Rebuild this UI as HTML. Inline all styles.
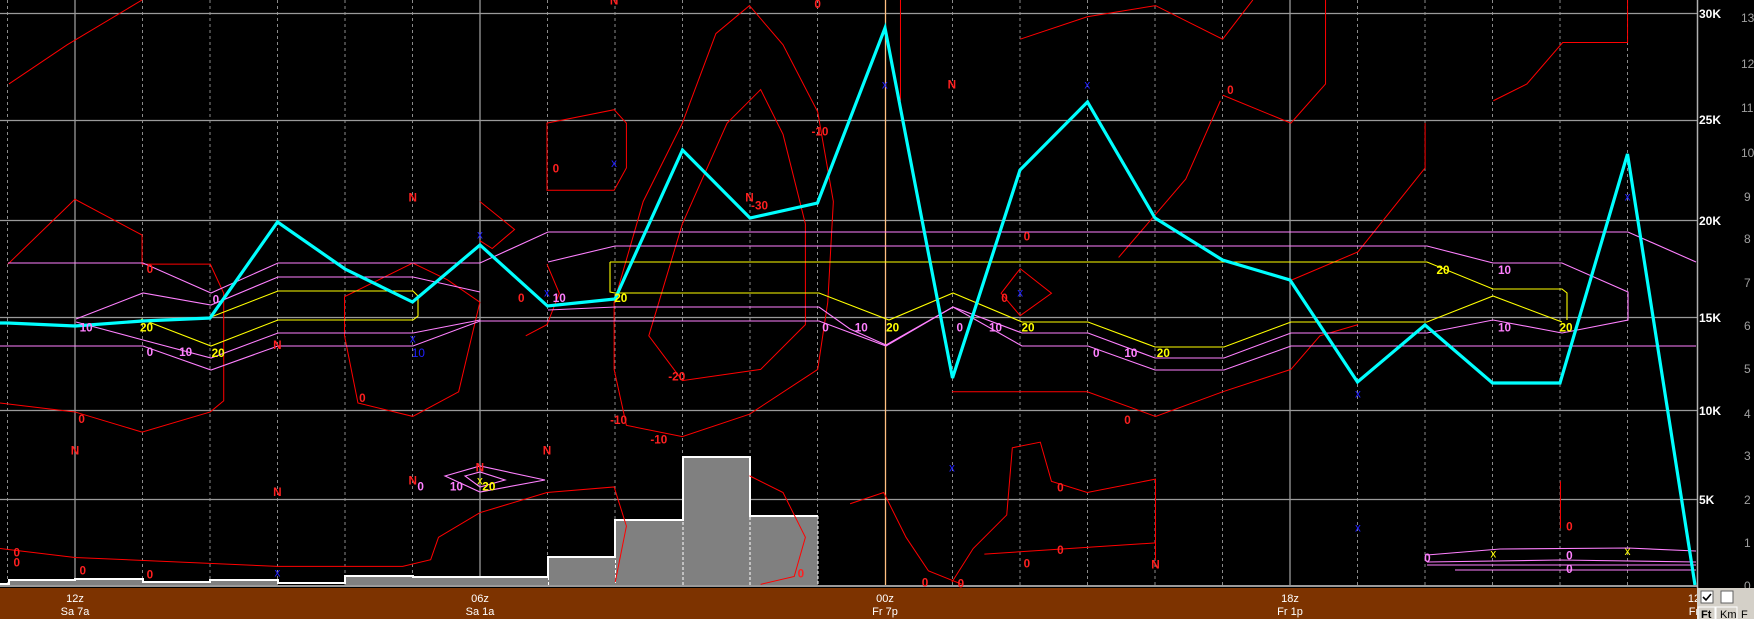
<!DOCTYPE html>
<html><head><meta charset="utf-8"><style>
html,body{margin:0;padding:0;background:#000;overflow:hidden}
svg{display:block}
text{font-family:"Liberation Sans",sans-serif}
</style></head><body>
<svg width="1754" height="619" viewBox="0 0 1754 619" xmlns="http://www.w3.org/2000/svg">
<rect width="1754" height="619" fill="#000"/>
<!-- dashed verticals -->
<g stroke="#8a8a8a" stroke-width="1" stroke-dasharray="3,3">
<path d="M7.5 0V586M142.5 0V586M210 0V586M277.5 0V586M345 0V586M412.5 0V586M547.5 0V586M615 0V586M682.5 0V586M750 0V586M817.5 0V586M952.5 0V586M1020 0V586M1087.5 0V586M1155 0V586M1222.5 0V586M1357.5 0V586M1425 0V586M1492.5 0V586M1560 0V586M1627.5 0V586"/>
</g>
<g stroke="#9a9a9a" stroke-width="1.3">
<path d="M75 0V586M480 0V586M1290 0V586"/>
<path d="M0 13.5H1697M0 120.5H1697M0 220.5H1697M0 317.5H1697M0 410.5H1697M0 499.5H1697"/>
</g>
<path d="M885.5 0V586" stroke="#ffc080" stroke-width="1.3"/>
<!-- histogram -->
<g fill="#808080" stroke="none">
<rect x="9" y="580" width="66" height="6"/><rect x="75" y="579" width="68" height="7"/><rect x="143" y="582" width="67" height="4"/><rect x="210" y="580" width="68" height="6"/><rect x="345" y="576" width="68" height="10"/><rect x="413" y="577" width="135" height="9"/><rect x="548" y="557" width="67" height="29"/><rect x="615" y="520" width="68" height="66"/><rect x="683" y="457" width="67" height="129"/><rect x="750" y="516" width="68" height="70"/>
</g>
<g stroke="#fff" stroke-width="2" fill="none">
<path d="M0 584H9V580H75V579H143V582H210V580H278V583H345V576H413V577H548V557H615V520H683V457H750V516H818"/>
</g>
<g stroke="#fff" stroke-width="1" stroke-dasharray="3,2" fill="none"><path d="M548.5 557V586M615.5 520V586M683 457V586M750 457V586M818 516V586"/></g>
<path d="M0 586H1697" stroke="#9a9a9a" stroke-width="2"/>
<!-- red contours in main coords -->
<g transform="scale(1.1186,1.1194)" fill="none" stroke="#ff0000" stroke-width="0.9">
<path d="M8 75L60 40L127 0"/>
<path d="M7 236L67 178L127 210L127 236L188 236L200 262L200 358L188 368L127 386L67 368L0 360"/>
<path d="M308 265L369 235L400 250L429 270L410 350L369 372L320 360L308 300Z"/>
<path d="M489 110L549 98L560 110L560 150L549 170L489 170Z"/>
<path d="M549 270L575 180L610 110L640 30L670 5L700 40L731 100L745 180L740 270L731 330L670 370L610 390L560 380L549 330Z"/>
<path d="M580 300L610 200L650 110L680 80L700 120L720 200L720 290L680 330L610 340Z"/>
<path d="M429 180L460 205L440 222L429 215"/>
<path d="M489 236L500 262L489 290L470 300"/>
<path d="M0 490L67 498L248 506L360 506L385 500L392 480L429 458L489 440L549 435L560 470L550 520"/>
<path d="M912 35L972 15L1033 5L1093 35L1120 0"/>
<path d="M1093 85L1154 110L1185 75L1185 0"/>
<path d="M1335 90L1365 75L1397 38L1455 38L1455 0"/>
<path d="M1000 230L1060 160L1091 90"/>
<path d="M1155 250L1214 225L1274 150L1274 110"/>
<path d="M805 0V90"/>
<path d="M912 240L940 262L912 282L895 262Z"/>
<path d="M851 350L972 350L1033 372L1093 350L1154 330L1180 300L1214 290"/>
<path d="M851 520L870 490L900 460L905 400L930 395L940 430L972 440L1033 428L1033 500"/>
<path d="M880 495L1033 485"/>
<path d="M670 425L700 440L720 480L710 515L680 522"/>
<path d="M760 450L790 440L810 480L830 510L860 522"/>
<path d="M1395 430L1395 472"/>
</g>
<!-- magenta lines -->
<g fill="none" stroke="#ff80ff" stroke-width="1.1">
<path d="M0 346H143L211 370L278 346H413L480 321H819L886 346L953 307L1022 346H1088L1155 370H1224L1291 346H1696"/>
<path d="M8 263H143L211 293L278 263H480L548 232H1628L1696 262"/>
<path d="M76 319L143 293L211 305L278 277H413L480 292"/>
<path d="M76 322L143 340L211 358L278 333H413L480 320"/>
<path d="M548 262L615 246H1427L1493 263H1562L1628 292V320L1562 333L1493 320L1427 333H1291L1224 358H1155L1088 333H1022L953 307L886 345L850 329L819 307H615L548 310"/>
<path d="M1427 555L1500 549L1628 548L1696 551M1427 562L1560 560L1696 562M1427 565H1696M1455 570L1696 570"/>
<path d="M445 476L480 466L545 480L480 492Z"/>
<path d="M465 476L480 472L505 480L480 487Z"/>
</g>
<!-- yellow lines -->
<g fill="none" stroke="#ffff00" stroke-width="1.1">
<path d="M141 319L211 346L278 320H413L418 316V296L413 291H278L211 317"/>
<path d="M610 262V292L615 293H819L889 320L953 293L1022 322H1088L1155 347H1224L1291 322H1427L1493 296L1562 322"/>
<path d="M610 262H1427L1493 289H1562L1567 293V320"/>
</g>
<!-- cyan -->
<polyline fill="none" stroke="#00ffff" stroke-width="3.2" stroke-linejoin="miter" points="0,323 7.5,323 75,326 142.5,321 210,318 277.5,222 345,269 412.5,302 480,245 547.5,306 615,299 682.5,150 750,218 817.5,203 885,28 952.5,378 1020,170 1087.5,102 1155,218 1222.5,260 1290,280 1357.5,382 1425,325 1492.5,383 1560,383 1627.5,154 1695,585"/>
<!-- labels main coords -->
<g transform="scale(1.1186,1.1194)" font-size="10.5" font-family="Liberation Mono,monospace" font-weight="bold" text-anchor="middle">
<g fill="#ff2020">
<text x="549" y="4">N</text><text x="369" y="180">N</text><text x="248" y="312">N</text><text x="67" y="406">N</text><text x="489" y="406">N</text><text x="248" y="443">N</text><text x="369" y="433">N</text><text x="429" y="421">N</text><text x="670" y="180">N</text><text x="851" y="79">N</text><text x="1033" y="508">N</text>
<text x="731" y="7">0</text><text x="134" y="244">0</text><text x="73" y="378">0</text><text x="324" y="359">0</text><text x="466" y="270">0</text><text x="497" y="154">0</text><text x="1100" y="84">0</text><text x="918" y="215">0</text><text x="898" y="270">0</text><text x="1008" y="379">0</text><text x="948" y="439">0</text><text x="948" y="495">0</text><text x="918" y="507">0</text><text x="859" y="525">0</text><text x="827" y="524">0</text><text x="716" y="516">0</text><text x="1403" y="474">0</text><text x="74" y="513">0</text><text x="134" y="517">0</text><text x="15" y="497">0</text><text x="15" y="506">0</text>
<text x="733" y="121">-10</text><text x="553" y="379">-10</text><text x="589" y="396">-10</text><text x="605" y="340">-20</text><text x="679" y="187">-30</text>
</g>
<g fill="#2020ff" font-weight="normal">
<text x="549" y="149">x</text><text x="791" y="79">x</text><text x="972" y="79">x</text><text x="429" y="213">x</text><text x="489" y="265">x</text><text x="369" y="306">x</text><text x="912" y="265">x</text><text x="851" y="421">x</text><text x="1214" y="355">x</text><text x="1214" y="475">x</text><text x="248" y="515">x</text><text x="1455" y="179">x</text><text x="374" y="319">10</text>
</g>
<g fill="#ff80ff">
<text x="77" y="296">10</text><text x="134" y="318">0</text><text x="166" y="318">10</text><text x="193" y="271">0</text><text x="500" y="270">10</text><text x="738" y="296">0</text><text x="770" y="296">10</text><text x="858" y="296">0</text><text x="890" y="296">10</text><text x="980" y="319">0</text><text x="1011" y="319">10</text><text x="1345" y="245">10</text><text x="1345" y="296">10</text><text x="376" y="438">0</text><text x="408" y="438">10</text><text x="1276" y="502">0</text><text x="1403" y="500">0</text><text x="1403" y="512">0</text>
</g>
<g fill="#ffff00">
<text x="131" y="296">20</text><text x="195" y="319">20</text><text x="555" y="270">20</text><text x="798" y="296">20</text><text x="919" y="296">20</text><text x="1040" y="319">20</text><text x="1290" y="245">20</text><text x="1400" y="296">20</text><text x="437" y="438">20</text>
<text x="1335" y="498" font-weight="normal">x</text><text x="1455" y="496" font-weight="normal">x</text><text x="429" y="433" font-weight="normal">x</text>
</g>
</g>
<!-- right axis -->
<rect x="1697" y="0" width="57" height="588" fill="#000"/>
<path d="M1697.5 0V588" stroke="#b0b0b0" stroke-width="1.5"/>
<g font-size="12" fill="#fff" font-weight="bold">
<text x="1699" y="18">30K</text><text x="1699" y="124">25K</text><text x="1699" y="225">20K</text><text x="1699" y="322">15K</text><text x="1699" y="415">10K</text><text x="1699" y="504">5K</text>
</g>
<g font-size="12" fill="#a0a0a0">
<text x="1741" y="22">13</text><text x="1741" y="68">12</text><text x="1741" y="112">11</text><text x="1741" y="157">10</text><text x="1744" y="201">9</text><text x="1744" y="243">8</text><text x="1744" y="287">7</text><text x="1744" y="330">6</text><text x="1744" y="373">5</text><text x="1744" y="418">4</text><text x="1744" y="460">3</text><text x="1744" y="504">2</text><text x="1744" y="547">1</text><text x="1744" y="590">0</text>
</g>
<!-- bottom bar -->
<rect x="0" y="588" width="1697" height="31" fill="#7d3300"/>
<g font-size="11" fill="#fff" text-anchor="middle">
<text x="75" y="602">12z</text><text x="75" y="615">Sa 7a</text>
<text x="480" y="602">06z</text><text x="480" y="615">Sa 1a</text>
<text x="885" y="602">00z</text><text x="885" y="615">Fr 7p</text>
<text x="1290" y="602">18z</text><text x="1290" y="615">Fr 1p</text>
<text x="1694" y="602">12</text><text x="1694" y="615">Fr</text>
</g>
<rect x="1697" y="588" width="57" height="31" fill="#d4d0c8"/>
<rect x="1701" y="591" width="12" height="12" fill="#fff" stroke="#606060"/>
<path d="M1703 597l3 3l5-6" stroke="#000" stroke-width="1.6" fill="none"/>
<rect x="1721" y="591" width="12" height="12" fill="#fff" stroke="#606060"/>
<path d="M1698 619V607H1715V619M1716 619V607H1737V619" stroke="#fff" fill="none"/>
<g font-size="11" fill="#000"><text x="1701" y="618" font-weight="bold">Ft</text><text x="1720" y="618">Km</text><text x="1741" y="618">F</text></g>
</svg>
</body></html>
